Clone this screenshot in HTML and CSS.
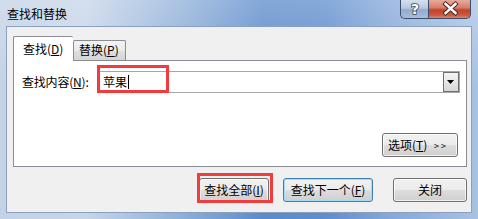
FILE: index.html
```html
<!DOCTYPE html>
<html lang="zh-CN">
<head>
    <meta charset="UTF-8">
    <title>查找和替换</title>
    <link rel="stylesheet" href="styles.css">
</head>
<body>
    <div class="window">
        <div class="titlebar">
            <span class="title">查找和替换</span>
            <div class="caption-btns">
                <div class="cap help">
                    <svg width="28" height="19" viewBox="0 0 28 19">
                        <text x="14" y="14.5" text-anchor="middle" class="cap-glyph">?</text>
                    </svg>
                </div>
                <div class="cap close">
                    <svg width="43" height="19" viewBox="0 0 43 19">
                        <path d="M16.5 5 L26.5 14 M26.5 5 L16.5 14" stroke="#4a2a26" stroke-width="4.4" stroke-linecap="square"/>
                        <path d="M16.5 5 L26.5 14 M26.5 5 L16.5 14" stroke="#ffffff" stroke-width="2.4" stroke-linecap="square"/>
                    </svg>
                </div>
            </div>
        </div>

        <div class="client">
            <div class="tabs">
                <div class="tab active">查找(<u>D</u>)</div>
                <div class="tab">替换(<u>P</u>)</div>
            </div>
            <div class="panel">
                <div class="find-row">
                    <label class="find-label">查找内容(<u>N</u>):</label>
                    <div class="combo">
                        <span class="combo-text">苹果</span><span class="caret"></span>
                        <span class="drop">
                            <svg width="8" height="5" viewBox="0 0 8 5"><path d="M0 0 H7 L3.5 4 Z" fill="#000"/></svg>
                        </span>
                    </div>
                </div>
                <div class="options-row">
                    <button class="btn btn-options">选项(<u>T</u>) <span class="arrows">&gt;&gt;</span></button>
                </div>
            </div>
            <div class="actions">
                <button class="btn btn-all">查找全部(<u>I</u>)</button>
                <button class="btn btn-next">查找下一个(<u>F</u>)</button>
                <button class="btn btn-close">关闭</button>
            </div>
        </div>

        <div class="mark mark-input"></div>
        <div class="mark mark-button"></div>
    </div>
</body>
</html>
```

FILE: styles.css
```css
body {
    margin: 0;
    padding: 0;
    font-family: "Noto Sans CJK SC", "Liberation Sans", sans-serif;
    font-size: 12px;
    color: #000000;
}

.window {
    position: relative;
    width: 478px;
    height: 219px;
    box-sizing: border-box;
    padding: 0 7px 7px 7px;
    display: flex;
    flex-direction: column;
    background:
        linear-gradient(180deg, rgba(255,255,255,0.25) 0%, rgba(255,255,255,0) 40%),
        linear-gradient(90deg, #c3d2e6 0%, #c6d5e8 18%, #8eafd9 38%, #5c8bcb 55%, #5e8ecd 68%, #86a9d9 82%, #a9c2e3 100%);
}

.titlebar {
    height: 27px;
    display: flex;
    justify-content: space-between;
    align-items: flex-start;
}

.title {
    font-size: 12px;
    line-height: 14px;
    margin-top: 7px;
    color: #000000;
}

.caption-btns {
    display: flex;
}

.cap {
    height: 19px;
    box-sizing: border-box;
    border: 1px solid #3a4d6a;
    border-top: none;
}

.cap svg {
    display: block;
    margin-top: -1px;
}

.help {
    width: 28px;
    border-radius: 0 0 0 5px;
    border-right: none;
    background: linear-gradient(180deg, #d5e0ee 0%, #b7c8de 45%, #93aacb 55%, #a9bfdb 100%);
}

.close {
    width: 43px;
    border-radius: 0 0 5px 0;
    background: linear-gradient(180deg, #e8ab9b 0%, #d77e6b 42%, #c3412c 56%, #cc5a41 85%, #dc8a6f 100%);
}

.cap-glyph {
    font-family: "DejaVu Sans", sans-serif;
    font-size: 14px;
    font-weight: bold;
    fill: #ffffff;
    stroke: #3b4a60;
    stroke-width: 1.6;
    paint-order: stroke;
}

.client {
    flex: 1;
    background: #f0f0f0;
    box-shadow: 0 0 0 1px #8aa0bc;
    padding: 9px 4px 0 6px;
    display: flex;
    flex-direction: column;
}

.tabs {
    display: flex;
    align-items: flex-end;
    height: 24px;
}

.tab {
    box-sizing: border-box;
    height: 20px;
    line-height: 18px;
    white-space: nowrap;
    padding: 0 8px;
    border: 1px solid #898c95;
    border-bottom: none;
    background: linear-gradient(180deg, #f3f3f3 0%, #ebebeb 50%, #dedede 55%, #d5d5d5 100%);
    border-radius: 2px 2px 0 0;
}

.tab.active {
    position: relative;
    z-index: 1;
    height: 25px;
    margin-bottom: -1px;
    width: 60px;
    padding: 3px 0 0 9px;
    background: #ffffff;
    border-right: none;
}

.tab + .tab {
    width: 53px;
    padding: 0 0 0 5px;
}

.panel {
    height: 107px;
    box-sizing: border-box;
    border: 1px solid #898c95;
    background: #ffffff;
    padding: 10px 6px 9px 8px;
    display: flex;
    flex-direction: column;
    justify-content: space-between;
}

.find-row {
    display: flex;
    align-items: center;
}

.find-label {
    flex-shrink: 0;
    width: 76px;
    white-space: nowrap;
    line-height: 16px;
    letter-spacing: -0.2px;
}

.combo {
    flex: 1;
    height: 22px;
    box-sizing: border-box;
    border: 1px solid #a7a7a7;
    display: flex;
    align-items: center;
    padding-left: 4px;
}

.combo-text {
    line-height: 16px;
}

.caret {
    width: 1px;
    height: 14px;
    background: #000000;
    margin-left: 1px;
}

.drop {
    margin-left: auto;
    width: 16px;
    height: 20px;
    box-sizing: border-box;
    border: 1px solid #6f6f6f;
    background: linear-gradient(180deg, #f4f4f4 0%, #e6e6e6 50%, #d6d6d6 100%);
    display: flex;
    align-items: center;
    justify-content: center;
}

.drop svg {
    display: block;
}

.options-row {
    display: flex;
    justify-content: flex-end;
    padding-right: 2px;
}

.btn {
    height: 24px;
    box-sizing: border-box;
    border: 1px solid #707070;
    border-radius: 3px;
    background: linear-gradient(180deg, #f2f2f2 0%, #ebebeb 48%, #dddddd 52%, #cfcfcf 100%);
    font-family: "Noto Sans CJK SC", "Liberation Sans", sans-serif;
    font-size: 12px;
    line-height: 16px;
    color: #000000;
    padding: 0;
    white-space: nowrap;
    box-shadow: inset 0 0 0 1px rgba(255,255,255,0.7);
}

.btn-options {
    width: 76px;
    padding-right: 4px;
}

.arrows {
    font-size: 9px;
    letter-spacing: 2px;
    margin-left: 4px;
    vertical-align: 1px;
}

.actions {
    display: flex;
    justify-content: flex-end;
    margin-top: 11px;
}

.btn-all {
    width: 70px;
}

.btn-next {
    width: 90px;
    margin-left: 14px;
    border-color: #3c7fb1;
    box-shadow: inset 0 0 0 1px #9fdcf5;
}

.btn-close {
    width: 74px;
    margin-left: 20px;
}

.mark {
    position: absolute;
    border: 3px solid #f03c3c;
    box-sizing: border-box;
}

.mark-input {
    left: 97px;
    top: 65px;
    width: 72px;
    height: 28px;
}

.mark-button {
    left: 197px;
    top: 173px;
    width: 76px;
    height: 30px;
}
```
